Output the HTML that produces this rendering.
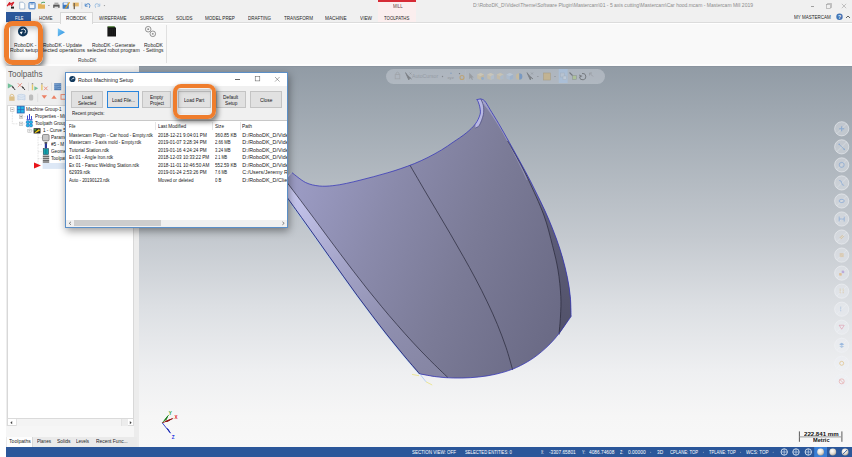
<!DOCTYPE html>
<html><head><meta charset="utf-8">
<style>
*{margin:0;padding:0;box-sizing:border-box}
html,body{width:852px;height:457px;overflow:hidden;background:#fff;font-family:"Liberation Sans",sans-serif;color:#333}
.a{position:absolute;white-space:nowrap}
.b{position:absolute}
</style></head><body>
<div class="b" style="left:6px;top:0;width:846px;height:23px;background:#f0f0f0"></div>
<div class="b" style="left:377.8px;top:2px;width:38.4px;height:20.5px;background:#fbeeee"></div>
<div class="b" style="left:377.8px;top:0;width:38.4px;height:2px;background:#d62a35"></div>
<div class="a" id="t0" style="left:393.40px;top:3.60px;font-size:5.4px;line-height:5.4px;color:#6a4040;transform:scaleX(0.8010);transform-origin:0 0;">MILL</div>
<div class="a" id="t1" style="left:472.90px;top:3.10px;font-size:5px;line-height:5px;color:#8c8c8c;transform:scaleX(1.0019);transform-origin:0 0;">D:\RoboDK_D\Video\Theme\Software Plugin\Mastercam\01 - 5 axis cutting\Mastercam\Car hood.mcam - Mastercam Mill 2019</div>
<div class="b" style="left:810.5px;top:6px;width:3.5px;height:0.6px;background:#a0a0a0"></div>
<svg class="b" style="left:825px;top:2px" width="8" height="8"><rect x="1.5" y="2.5" width="4" height="4" fill="none" stroke="#a0a0a0" stroke-width="0.6"/><path d="M2.5 2.5V1.5H6.5V5.5H5.5" fill="none" stroke="#a0a0a0" stroke-width="0.6"/></svg>
<svg class="b" style="left:840px;top:1.5px" width="8" height="8"><path d="M1.8 1.8L6.2 6.2M6.2 1.8L1.8 6.2" stroke="#a0a0a0" stroke-width="0.6"/></svg>
<div class="b" style="left:6px;top:22.3px;width:846px;height:1.2px;background:#dcdcdc"></div>
<div class="b" style="left:6px;top:11.7px;width:25px;height:10.8px;background:#2b579a"></div>
<div class="a" id="t2" style="left:14.50px;top:15.50px;font-size:5.6px;line-height:5.6px;color:#fff;transform:scaleX(0.7186);transform-origin:0 0;">FILE</div>
<div class="a" id="t3" style="left:39.00px;top:15.50px;font-size:5.6px;line-height:5.6px;color:#262626;transform:scaleX(0.8104);transform-origin:0 0;">HOME</div>
<div class="b" style="left:59.6px;top:12.3px;width:33.1px;height:11.3px;background:#f9f9f9;border:1px solid #d8d8d8;border-bottom:none"></div>
<div class="a" id="t4" style="left:65.60px;top:15.50px;font-size:5.6px;line-height:5.6px;color:#262626;transform:scaleX(0.8412);transform-origin:0 0;">ROBODK</div>
<div class="a" id="t5" style="left:99.40px;top:15.50px;font-size:5.6px;line-height:5.6px;color:#262626;transform:scaleX(0.8073);transform-origin:0 0;">WIREFRAME</div>
<div class="a" id="t6" style="left:140.00px;top:15.50px;font-size:5.6px;line-height:5.6px;color:#262626;transform:scaleX(0.7793);transform-origin:0 0;">SURFACES</div>
<div class="a" id="t7" style="left:175.90px;top:15.50px;font-size:5.6px;line-height:5.6px;color:#262626;transform:scaleX(0.7988);transform-origin:0 0;">SOLIDS</div>
<div class="a" id="t8" style="left:205.00px;top:15.50px;font-size:5.6px;line-height:5.6px;color:#262626;transform:scaleX(0.8168);transform-origin:0 0;">MODEL PREP</div>
<div class="a" id="t9" style="left:247.60px;top:15.50px;font-size:5.6px;line-height:5.6px;color:#262626;transform:scaleX(0.8009);transform-origin:0 0;">DRAFTING</div>
<div class="a" id="t10" style="left:283.60px;top:15.50px;font-size:5.6px;line-height:5.6px;color:#262626;transform:scaleX(0.8183);transform-origin:0 0;">TRANSFORM</div>
<div class="a" id="t11" style="left:325.40px;top:15.50px;font-size:5.6px;line-height:5.6px;color:#262626;transform:scaleX(0.8373);transform-origin:0 0;">MACHINE</div>
<div class="a" id="t12" style="left:360.00px;top:15.50px;font-size:5.6px;line-height:5.6px;color:#262626;transform:scaleX(0.8393);transform-origin:0 0;">VIEW</div>
<div class="a" id="t13" style="left:384.30px;top:15.50px;font-size:5.6px;line-height:5.6px;color:#262626;transform:scaleX(0.7678);transform-origin:0 0;">TOOLPATHS</div>
<div class="a" id="t14" style="left:794.00px;top:14.90px;font-size:5.6px;line-height:5.6px;color:#262626;transform:scaleX(0.8049);transform-origin:0 0;">MY MASTERCAM</div>
<svg class="b" style="left:834.5px;top:13px" width="9" height="9"><circle cx="4.5" cy="3.7" r="3.2" fill="#4174b5"/><text x="4.5" y="5.6" font-size="5" font-weight="bold" fill="#fff" text-anchor="middle" font-family="Liberation Sans">?</text></svg>
<svg class="b" style="left:845px;top:14px" width="6" height="6"><path d="M1 4L3 2L5 4" fill="none" stroke="#555" stroke-width="0.9"/></svg>
<svg class="b" style="left:0;top:0" width="110" height="11">
<path d="M7.2 6.2L9.8 2.3L9.6 4.6L13.8 2.2L11.2 6.2" fill="none" stroke="#d4202a" stroke-width="1.3"/>
<rect x="11" y="6.6" width="3" height="2" fill="#222"/>
<path d="M19.7 2.2H23L24.8 4V9H19.7Z" fill="#fdfdfd" stroke="#8aa7c8" stroke-width="0.7"/>
<rect x="29" y="2.6" width="6" height="6.2" fill="#f4f7fb" stroke="#3b77c0" stroke-width="1" rx="0.4"/><rect x="30.4" y="2.6" width="3.2" height="2.2" fill="#3b77c0" opacity="0.5"/>
<path d="M38 3.8H41L41.8 4.6H45V8.8H38Z" fill="#e2b25a"/><path d="M41 3.2Q43 1.5 45 2.5" fill="none" stroke="#3a9a55" stroke-width="0.9"/>
<path d="M48 5L49.8 5L48.9 6Z" fill="#777"/>
<rect x="53.2" y="4.5" width="6.4" height="3.4" fill="#555" rx="0.6"/><rect x="54.4" y="2.6" width="4" height="2" fill="#aaa"/><rect x="54.4" y="6.6" width="4" height="2" fill="#ddd"/>
<rect x="62.6" y="2.6" width="6.2" height="6.2" fill="#3b77c0" rx="0.5"/><rect x="63.6" y="2.6" width="4" height="2.2" fill="#e9eef5"/><path d="M65.5 8.5L69.5 2.2" stroke="#e8a317" stroke-width="1.2"/>
<rect x="72.8" y="2.6" width="6" height="3.8" fill="#e6b86b"/><rect x="73.6" y="3" width="1.4" height="6.2" fill="#7a6a55"/>
<rect x="81.6" y="2" width="0.6" height="7" fill="#cfcfcf"/>
<path d="M85.2 3.6V6.2H87.6M85.4 6Q86.2 3 89.2 3.8Q90.6 5 89.4 7.8" fill="none" stroke="#4b86c8" stroke-width="0.9"/>
<path d="M99.8 3.6V6.2H97.4M99.6 6Q98.8 3 95.8 3.8Q94.4 5 95.6 7.8" fill="none" stroke="#9fbfe0" stroke-width="0.9"/>
<path d="M103.6 5.2L105.2 5.2L104.4 6.2Z" fill="#777"/>
</svg>
<div class="b" style="left:6px;top:23.5px;width:846px;height:42.2px;background:#fdfdfd"></div>
<div class="b" style="left:6px;top:23.5px;width:846px;height:40.1px;background:#f9f9f9"></div>
<div class="b" style="left:166px;top:25px;width:0.8px;height:38px;background:#e0e0e0"></div>
<svg class="b" style="left:40px;top:24px" width="125" height="16">
<defs><linearGradient id="pl" x1="0" y1="0" x2="1" y2="1"><stop offset="0" stop-color="#7ccaf5"/><stop offset="1" stop-color="#2a8ee0"/></linearGradient></defs>
<path d="M17.8 4.2L25 8.3L17.8 12.4Z" fill="url(#pl)"/>
<path d="M67.4 2.6H74.5L76 4.1V12.4H67.4Z" fill="#151515"/><path d="M68 2.6H74.3L74.9 3.3H68Z" fill="#4f9a2a"/><path d="M69 5V11M70.8 5V11M72.6 5V11M74.4 5V11" stroke="#2c2c2c" stroke-width="0.4"/>
<g fill="#f4f4f4" stroke="#8a8a8a" stroke-width="0.9"><circle cx="108.2" cy="5.2" r="2.8"/><circle cx="112.8" cy="9.8" r="2.8"/></g>
<g fill="#8a8a8a"><circle cx="108.2" cy="5.2" r="0.9"/><circle cx="112.8" cy="9.8" r="0.9"/></g>
</svg>
<div class="a" id="t15" style="left:43.40px;top:43.00px;font-size:5.6px;line-height:5.6px;color:#262626;transform:scaleX(0.8855);transform-origin:0 0;">RoboDK - Update</div>
<div class="a" id="t16" style="left:36.60px;top:48.40px;font-size:5.6px;line-height:5.6px;color:#262626;transform:scaleX(0.9914);transform-origin:0 0;">selected operations</div>
<div class="a" id="t17" style="left:92.00px;top:43.00px;font-size:5.6px;line-height:5.6px;color:#262626;transform:scaleX(0.8759);transform-origin:0 0;">RoboDK - Generate</div>
<div class="a" id="t18" style="left:87.30px;top:48.40px;font-size:5.6px;line-height:5.6px;color:#262626;transform:scaleX(0.9160);transform-origin:0 0;">selected robot program</div>
<div class="a" id="t19" style="left:143.50px;top:43.00px;font-size:5.6px;line-height:5.6px;color:#262626;transform:scaleX(0.8934);transform-origin:0 0;">RoboDK</div>
<div class="a" id="t20" style="left:142.80px;top:48.40px;font-size:5.6px;line-height:5.6px;color:#262626;transform:scaleX(0.8629);transform-origin:0 0;">- Settings</div>
<div class="a" id="t21" style="left:77.50px;top:58.20px;font-size:5.6px;line-height:5.6px;color:#3a3a3a;transform:scaleX(0.8697);transform-origin:0 0;">RoboDK</div>
<div class="b" style="left:4.2px;top:21.1px;width:38.4px;height:44.3px;border-radius:8px;box-shadow:1.5px 2.5px 5px rgba(0,0,0,0.5)"></div>
<div class="b" style="left:9.5px;top:26px;width:28.7px;height:34.4px;background:#fafafa;box-shadow:inset 2.5px 2px 6px rgba(0,0,0,0.3)"></div>
<svg class="b" style="left:16px;top:25px" width="14" height="13">
<circle cx="6.9" cy="6.5" r="4.9" fill="#0f3557"/>
<path d="M5.2 4.8Q7.5 3 9.2 4.9Q10.2 6.6 8.8 8.2" fill="none" stroke="#fff" stroke-width="0.9"/><path d="M3.8 6.9L6.8 6.6L5.3 9.4Z" fill="#fff"/>
</svg>
<div class="a" id="t22" style="left:14.20px;top:42.50px;font-size:5.6px;line-height:5.6px;color:#262626;transform:scaleX(0.9120);transform-origin:0 0;">RoboDK -</div>
<div class="a" id="t23" style="left:10.40px;top:48.40px;font-size:5.6px;line-height:5.6px;color:#262626;transform:scaleX(0.9214);transform-origin:0 0;">Robot setup</div>
<div class="b" style="left:4.2px;top:21.1px;width:38.8px;height:44.3px;border:5px solid #ef7d2d;border-radius:8.5px"></div>
<div class="b" style="left:6px;top:65.7px;width:133px;height:381.3px;background:#eeeeee"></div>
<div class="a" id="t24" style="left:8.40px;top:69.50px;font-size:8.6px;line-height:8.6px;color:#5a5a5a;transform:scaleX(0.9376);transform-origin:0 0;">Toolpaths</div>
<svg class="b" style="left:6px;top:80px" width="133" height="24">
<path d="M1.8 3.2L6.8 5.8L1.8 8.4Z" fill="#72c09a"/><path d="M6.2 6.4L9.2 10" stroke="#3a3a3a" stroke-width="1"/><path d="M5.8 5.8L8.2 7.2L6.8 8.2Z" fill="#3a3a3a"/>
<path d="M11.8 3.2L15.8 7.2M15.8 3.2L11.8 7.2" stroke="#e98a7a" stroke-width="0.9"/><path d="M16.2 6.6L19 10" stroke="#3a3a3a" stroke-width="1"/><path d="M15.6 6L18 7.4L16.6 8.4Z" fill="#3a3a3a"/>
<rect x="22" y="2.5" width="0.6" height="8.5" fill="#d6d6d6"/>
<rect x="25.8" y="3" width="1.4" height="1.6" fill="#9a9a9a"/><rect x="25.8" y="4.6" width="1.4" height="5.6" fill="#e6c86a"/><path d="M28.4 6.2L32.2 8.3L28.4 10.4Z" fill="#72c09a"/>
<rect x="35.2" y="3" width="1.4" height="1.6" fill="#9a9a9a"/><rect x="35.2" y="4.6" width="1.4" height="5.6" fill="#e6c86a"/><path d="M38 6.6L41.6 10.2M41.6 6.6L38 10.2" stroke="#e98a7a" stroke-width="0.9"/>
<rect x="45.2" y="2.5" width="0.6" height="8.5" fill="#d6d6d6"/>
<rect x="48.2" y="3.2" width="7" height="7" fill="#4f7db5"/><path d="M48.2 4.6Q50 4 51.7 4.6T55.2 4.6M48.2 6.4Q50 5.8 51.7 6.4T55.2 6.4M48.2 8.2Q50 7.6 51.7 8.2T55.2 8.2" fill="none" stroke="#a9c6e8" stroke-width="0.5"/>
<rect x="59" y="4" width="1" height="6" fill="#e3c255"/>
<rect x="3.2" y="16.4" width="5.4" height="4.4" fill="#dcc08a"/><path d="M4.2 16.4V15Q5.9 13.4 7.6 15V16.4" fill="none" stroke="#dcc08a" stroke-width="0.9"/>
<path d="M11.8 15Q15 13.5 19 15V20Q15 18.5 11.8 20Z" fill="#e4ecf5" stroke="#b4c8e0" stroke-width="0.6"/><path d="M12 16.6Q15.4 15.2 18.8 16.6M12 18.3Q15.4 16.9 18.8 18.3" fill="none" stroke="#b4c8e0" stroke-width="0.5"/>
<rect x="23" y="14.5" width="4.2" height="6" fill="#bdbdbd" rx="1.5"/>
<rect x="31.5" y="13.5" width="0.6" height="8.5" fill="#d6d6d6"/>
<path d="M35.6 15.2L41 15.2L38.3 18.8Z" fill="#ec8064"/>
<path d="M45.4 18.8L50.7 18.8L48 15.2Z" fill="#ec8064"/>
<rect x="55" y="14.6" width="5" height="4.6" fill="none" stroke="#ec8064" stroke-width="0.9"/>
</svg>
<div class="b" style="left:6.9px;top:105px;width:126.9px;height:321.4px;background:#fff;border:0.5px solid #d8d8d8"></div>
<div class="b" style="left:133.8px;top:66px;width:5.2px;height:381px;background:#ececec"></div>
<svg class="b" style="left:6px;top:104px" width="70" height="68">
<g fill="none" stroke="#bdbdbd" stroke-width="0.5" stroke-dasharray="0.8 0.8">
<path d="M6.3 6V19.8H12"/><path d="M15 13V12.7H20M15 19.8H20"/><path d="M23.5 23V26.8H28"/><path d="M32 30V61.6H28M32 33.7H36M32 40.6H36M32 47.7H36M32 54.7H36"/>
</g>
<rect x="4.6" y="3.8" width="3.4" height="3.4" fill="#fff" stroke="#aaa" stroke-width="0.5"/>
<path d="M5.4 5.5H7.2" stroke="#555" stroke-width="0.5"/>
<rect x="11.2" y="2.2" width="7" height="6.8" fill="#1fb7e8" stroke="#2c5fb0" stroke-width="0.8"/><path d="M14.7 2.2V9M11.2 5.6H18.2" stroke="#2c5fb0" stroke-width="0.7"/>
<rect x="13.4" y="11" width="3.4" height="3.4" fill="#fff" stroke="#aaa" stroke-width="0.5"/><path d="M14.2 12.7H16M15.1 11.8V13.6" stroke="#555" stroke-width="0.5"/>
<path d="M20.5 15.8H26.5M21.5 15.5V11.5M23.5 15.5V10M25.5 15.5V12" stroke="#2233cc" stroke-width="0.9"/>
<rect x="13.4" y="18.1" width="3.4" height="3.4" fill="#fff" stroke="#aaa" stroke-width="0.5"/><path d="M14.2 19.8H16" stroke="#555" stroke-width="0.5"/>
<g fill="#1fb7e8" stroke="#2c5fb0" stroke-width="0.5"><circle cx="21.8" cy="18.2" r="1.6"/><circle cx="25" cy="18.2" r="1.6"/><circle cx="21.8" cy="21.4" r="1.6"/><circle cx="25" cy="21.4" r="1.6"/></g>
<rect x="21.8" y="25.2" width="3.4" height="3.4" fill="#fff" stroke="#aaa" stroke-width="0.5"/><path d="M22.6 26.9H24.4" stroke="#555" stroke-width="0.5"/>
<path d="M27.6 24.2H34.5V29.5H27.6Z" fill="#2a2a2a"/><path d="M28.5 28.5L33 25L34 26.5L29.5 29Z" fill="#f0d010"/><rect x="28.2" y="25" width="2" height="1.6" fill="#40a040"/>
<rect x="36.5" y="30.5" width="6.6" height="6.4" rx="1.2" fill="#c8c8c8" stroke="#555" stroke-width="0.6"/>
<path d="M38.8 38.5V43.5L40 45L41 43.5V38.5Z" fill="#2a3a9a"/><rect x="38.6" y="38" width="2.6" height="1.6" fill="#555"/>
<rect x="37.2" y="44.6" width="5.4" height="6" fill="#15a5b0" stroke="#234" stroke-width="0.5"/><path d="M39.9 45V50" stroke="#0d5560" stroke-width="0.5"/>
<g stroke="#111" stroke-width="0.9"><path d="M36.8 52.2H43.2M36.8 54.2H43.2M36.8 56.2H43.2M36.8 58H43.2"/></g>
<path d="M28 58.6L35 61.6L28 64.6Z" fill="#e8141a"/>
<rect x="36.6" y="59" width="33.4" height="5.9" fill="#dde8f6"/>
</svg>
<div class="a" id="t25" style="left:25.90px;top:106.80px;font-size:5.6px;line-height:5.6px;color:#161616;transform:scaleX(0.8237);transform-origin:0 0;">Machine Group-1</div>
<div class="a" id="t26" style="left:34.80px;top:113.90px;font-size:5.6px;line-height:5.6px;color:#161616;transform:scaleX(0.8239);transform-origin:0 0;">Properties - Mill Default</div>
<div class="a" id="t27" style="left:34.80px;top:121.00px;font-size:5.6px;line-height:5.6px;color:#161616;transform:scaleX(0.8234);transform-origin:0 0;">Toolpath Group-1</div>
<div class="a" id="t28" style="left:43.40px;top:128.00px;font-size:5.6px;line-height:5.6px;color:#161616;transform:scaleX(0.8231);transform-origin:0 0;">1 - Curve 5-axis</div>
<div class="a" id="t29" style="left:51.10px;top:134.90px;font-size:5.6px;line-height:5.6px;color:#161616;transform:scaleX(0.8229);transform-origin:0 0;">Parameters</div>
<div class="a" id="t30" style="left:51.10px;top:141.80px;font-size:5.6px;line-height:5.6px;color:#161616;transform:scaleX(0.8260);transform-origin:0 0;">#5 - M</div>
<div class="a" id="t31" style="left:51.10px;top:149.00px;font-size:5.6px;line-height:5.6px;color:#161616;transform:scaleX(0.8224);transform-origin:0 0;">Geometry</div>
<div class="a" id="t32" style="left:51.10px;top:155.90px;font-size:5.6px;line-height:5.6px;color:#161616;transform:scaleX(0.8225);transform-origin:0 0;">Toolpath</div>
<div class="b" style="left:6px;top:426.4px;width:128px;height:10.7px;background:#f6f6f6"></div>
<div class="b" style="left:7px;top:418.4px;width:126.8px;height:8px;background:#fff;border:0.6px solid #dadada"></div>
<div class="b" style="left:15.6px;top:419.2px;width:106px;height:6.4px;background:#f4f4f4;border-left:0.6px solid #e2e2e2;border-right:0.6px solid #e2e2e2"></div>
<div class="b" style="left:121.6px;top:419.2px;width:6px;height:6.4px;background:#ececec"></div>
<svg class="b" style="left:7px;top:418.6px" width="127" height="8"><path d="M5.2 2.1L3.3 3.7L5.2 5.3Z" fill="#444"/><path d="M122.8 2.1L124.7 3.7L122.8 5.3Z" fill="#444"/></svg>
<div class="b" style="left:6px;top:437.1px;width:131px;height:9.7px;background:#eaeaea"></div>
<div class="b" style="left:6.6px;top:437.1px;width:26.3px;height:9.7px;background:#fdfdfd;border-right:0.5px solid #d8d8d8"></div>
<div class="a" id="t33" style="left:8.50px;top:438.90px;font-size:5.4px;line-height:5.4px;color:#1e1e1e;transform:scaleX(0.9490);transform-origin:0 0;">Toolpaths</div>
<div class="a" id="t34" style="left:37.00px;top:439.10px;font-size:5.4px;line-height:5.4px;color:#1e1e1e;transform:scaleX(0.8493);transform-origin:0 0;">Planes</div>
<div class="a" id="t35" style="left:57.20px;top:439.10px;font-size:5.4px;line-height:5.4px;color:#1e1e1e;transform:scaleX(0.9191);transform-origin:0 0;">Solids</div>
<div class="a" id="t36" style="left:76.40px;top:439.10px;font-size:5.4px;line-height:5.4px;color:#1e1e1e;transform:scaleX(0.8401);transform-origin:0 0;">Levels</div>
<div class="a" id="t37" style="left:95.60px;top:439.10px;font-size:5.4px;line-height:5.4px;color:#1e1e1e;transform:scaleX(0.9041);transform-origin:0 0;">Recent Func...</div>
<div class="b" style="left:139px;top:65.7px;width:713px;height:381.3px;background:linear-gradient(#919ba5 0%,#aab2ba 22%,#c4c9cf 45%,#dcdfe3 63%,#eeeff1 80%,#f6f6f6 92%,#f8f8f8 100%)"></div>
<div class="b" style="left:139px;top:65.7px;width:713px;height:1px;background:#8a949f"></div>
<div class="b" style="left:385.6px;top:68.5px;width:219.2px;height:15px;border-radius:7.5px;background:rgba(212,217,223,0.42)"></div>
<div class="a" id="t38" style="left:412.40px;top:72.80px;font-size:6.2px;line-height:6.2px;color:#959ca5;transform:scaleX(0.8339);transform-origin:0 0;">AutoCursor</div>
<svg class="b" style="left:385px;top:68px" width="222" height="16">
<g opacity="0.4">
<rect x="10.2" y="6.6" width="4.6" height="4.2" fill="none" stroke="#8a8a8a" stroke-width="0.8"/><path d="M11 6.6V5Q12.5 3.4 14 5V6.6" fill="none" stroke="#8a8a8a" stroke-width="0.8"/>
<path d="M20.5 4.5L23.8 11.8L24.6 9.4L26.5 11" fill="#333" stroke="#333" stroke-width="1"/><path d="M24.5 4.5L26.5 6.5M26.5 4.5L24.5 6.5" stroke="#555" stroke-width="0.5"/>
<circle cx="57.5" cy="8.5" r="0.7" fill="#444"/>
<text x="62.5" y="11" font-size="4.2" fill="#666" font-family="Liberation Sans">xyz</text><circle cx="66" cy="5.2" r="0.7" fill="#3a78c0"/>
<circle cx="77" cy="9.5" r="2" fill="none" stroke="#d08a10" stroke-width="1.1"/><circle cx="74.5" cy="5.6" r="0.7" fill="#222"/>
<path d="M84.2 4.8V11.2L85.8 9.8L87 12L88 11.5L86.8 9.4H88.8Z" fill="#777"/><rect x="80.6" y="2" width="0.5" height="12" fill="#c8ccd2"/><path d="M95.6 5L99.0 6.6V10.4L95.6 12L92.19999999999999 10.4V6.6Z" fill="#e6c88a"/><path d="M95.6 5L99.0 6.6L95.6 8.2L92.19999999999999 6.6Z" fill="#f0dcae"/><path d="M95.6 8.2L99.0 6.6V10.4L95.6 12Z" fill="#d8b878"/><circle cx="97.5" cy="10.5" r="1.4" fill="#6aa0d8"/><path d="M105.6 5L109.0 6.6V10.4L105.6 12L102.19999999999999 10.4V6.6Z" fill="#e2c890"/><path d="M105.6 5L109.0 6.6L105.6 8.2L102.19999999999999 6.6Z" fill="#eedcb8"/><path d="M105.6 8.2L109.0 6.6V10.4L105.6 12Z" fill="#b8cce0"/><path d="M115.2 5L118.60000000000001 6.6V10.4L115.2 12L111.8 10.4V6.6Z" fill="#e0c088"/><path d="M115.2 5L118.60000000000001 6.6L115.2 8.2L111.8 6.6Z" fill="#e8d4a8"/><path d="M115.2 8.2L118.60000000000001 6.6V10.4L115.2 12Z" fill="#a8c0dc"/><path d="M124.8 5L128.2 6.6V10.4L124.8 12L121.39999999999999 10.4V6.6Z" fill="#a8c4e4"/><path d="M124.8 5L128.2 6.6L124.8 8.2L121.39999999999999 6.6Z" fill="#c8dcf0"/><path d="M124.8 8.2L128.2 6.6V10.4L124.8 12Z" fill="#8ab0dc"/><circle cx="134.2" cy="8.5" r="3.2" fill="#e5c074"/><path d="M134.2 5.3A3.2 3.2 0 0 1 134.2 11.7Z" fill="#2a70c8"/>
<path d="M142 4.5L145.3 11.8L146.1 9.4L148 11" fill="#333" stroke="#333" stroke-width="1"/><path d="M146 4.5L148 6.5M148 4.5L146 6.5" stroke="#555" stroke-width="0.5"/>
<circle cx="152.9" cy="8.5" r="0.6" fill="#444"/>
<rect x="158.5" y="5" width="6.8" height="7" fill="#e0b050" stroke="#a07a30" stroke-width="0.6"/>
<circle cx="170" cy="8.5" r="0.6" fill="#444"/>
</g>
<rect x="173.7" y="1" width="9" height="14" fill="rgba(165,198,235,0.5)"/>
<g opacity="0.4">
<rect x="175.5" y="5" width="4" height="4" fill="#ccc" stroke="#999" stroke-width="0.5"/><rect x="178" y="8" width="3.5" height="3.5" fill="#ddd" stroke="#999" stroke-width="0.5"/>
<path d="M184.5 4.5L188 8" stroke="#222" stroke-width="1.1"/><rect x="187.5" y="7.5" width="4" height="4" fill="#a8d060" stroke="#555" stroke-width="0.5"/>
<path d="M197 5.5A3.2 3.2 0 1 1 194.5 9" fill="none" stroke="#222" stroke-width="1"/><path d="M194 6.5L195 9.5L197.5 8" fill="#222"/>
<path d="M204.5 5L208 8.5M204.5 5V7.5M204.5 5H207" stroke="#777" stroke-width="0.8" fill="none"/>
</g>
</svg>
<svg class="b" style="left:0;top:0" width="852" height="457">
<defs>
<linearGradient id="hg" x1="300" y1="190" x2="565" y2="300" gradientUnits="userSpaceOnUse">
<stop offset="0" stop-color="#9a9ac2"/><stop offset="0.3" stop-color="#8a8aab"/><stop offset="0.62" stop-color="#7b7b97"/><stop offset="1" stop-color="#6b6b86"/>
</linearGradient>
<linearGradient id="fl" x1="295" y1="185" x2="430" y2="370" gradientUnits="userSpaceOnUse">
<stop offset="0" stop-color="#c8c8f0"/><stop offset="0.4" stop-color="#a4a4c8"/><stop offset="0.75" stop-color="#8e8eae"/><stop offset="1" stop-color="#8686a4"/>
</linearGradient>
<linearGradient id="fr" x1="0" y1="100" x2="0" y2="330" gradientUnits="userSpaceOnUse"><stop offset="0" stop-color="#a4a4cc"/><stop offset="0.3" stop-color="#8282a6"/><stop offset="0.5" stop-color="#5e5e7a"/><stop offset="1" stop-color="#52526a"/></linearGradient>
</defs>
<path d="M287.5 198.0C289.9 201.3 296.9 211.1 301.6 217.6C306.3 224.1 310.9 230.6 315.5 237.1C320.1 243.6 324.8 250.2 329.4 256.7C334.0 263.2 338.6 269.7 343.3 276.2C348.0 282.7 352.6 289.3 357.4 295.8C362.2 302.3 367.1 308.8 372.0 315.3C376.9 321.8 381.9 328.4 387.1 334.9C392.3 341.4 397.6 347.9 403.0 354.4C408.4 360.9 416.9 370.7 419.7 374.0" fill="none" stroke="#a6cdf5" stroke-width="1.8"/>
<path d="M292.0 172.7C294.3 174.3 301.1 180.3 305.6 182.5C310.1 184.7 314.7 185.5 319.2 186.0C323.7 186.5 328.3 186.1 332.8 185.7C337.3 185.3 341.9 184.3 346.4 183.4C350.9 182.5 355.5 181.3 360.0 180.2C364.5 179.1 369.1 177.9 373.6 176.7C378.1 175.5 382.7 174.2 387.2 172.9C391.7 171.6 396.3 170.2 400.8 168.6C405.3 167.0 409.9 165.5 414.4 163.6C418.9 161.7 423.5 159.7 428.0 157.4C432.5 155.1 437.4 152.4 441.6 149.9C445.8 147.4 449.0 145.0 453.1 142.2C457.2 139.4 462.5 136.1 466.2 133.0C469.9 129.9 473.1 127.0 475.4 123.9C477.7 120.9 479.2 117.3 480.0 114.7C480.8 112.1 480.3 110.3 480.0 108.1C479.7 105.9 478.7 103.0 478.1 101.6C477.6 100.2 476.9 99.9 476.7 99.6L480.7 98.9C481.4 99.2 483.1 99.2 484.6 100.9C486.2 102.7 487.7 105.6 490.0 109.4C492.3 113.2 495.4 118.0 498.6 123.5C501.9 129.1 505.9 136.3 509.5 142.7C513.1 149.1 516.7 155.6 520.2 162.0C523.7 168.4 527.2 174.8 530.5 181.2C533.8 187.6 537.0 194.1 540.1 200.5C543.2 206.9 546.2 213.3 548.9 219.7C551.6 226.1 554.2 232.6 556.5 239.0C558.8 245.4 560.9 251.8 562.7 258.2C564.5 264.6 566.1 271.1 567.4 277.5C568.7 283.9 569.7 290.3 570.3 296.7C570.9 303.1 571.0 312.8 571.1 316.0L571.1 316.5C568.3 320.3 559.9 332.9 554.3 339.3C548.7 345.7 543.1 350.6 537.5 355.0C531.9 359.4 526.3 362.6 520.7 365.5C515.1 368.4 509.5 370.4 503.9 372.1C498.3 373.8 492.7 375.0 487.1 375.9C481.5 376.8 475.9 377.3 470.3 377.7C464.7 378.1 459.1 378.1 453.5 378.0C447.9 377.9 442.3 377.5 436.7 376.8C431.1 376.1 422.7 374.4 419.9 373.9L419.7 374.0C416.9 370.7 408.4 360.9 403.0 354.4C397.6 347.9 392.3 341.4 387.1 334.9C381.9 328.4 376.9 321.8 372.0 315.3C367.1 308.8 362.2 302.3 357.4 295.8C352.6 289.3 348.0 282.7 343.3 276.2C338.6 269.7 334.0 263.2 329.4 256.7C324.8 250.2 320.1 243.6 315.5 237.1C310.9 230.6 306.3 224.1 301.6 217.6C296.9 211.1 290.9 202.8 287.5 198.0C284.1 193.2 282.1 190.5 281.0 189.0L282 181Z" fill="url(#hg)"/>
<path d="M292 172.4L281 186L281.0 189.0C282.1 190.5 284.1 193.2 287.5 198.0C290.9 202.8 296.9 211.1 301.6 217.6C306.3 224.1 310.9 230.6 315.5 237.1C320.1 243.6 324.8 250.2 329.4 256.7C334.0 263.2 338.6 269.7 343.3 276.2C348.0 282.7 352.6 289.3 357.4 295.8C362.2 302.3 367.1 308.8 372.0 315.3C376.9 321.8 381.9 328.4 387.1 334.9C392.3 341.4 397.6 347.9 403.0 354.4C408.4 360.9 416.9 370.7 419.7 374.0L419.9 373.9C422.7 374.4 431.1 376.1 436.7 376.8C442.3 377.5 450.7 377.8 453.5 378.0L447.9 377.6C444.9 374.7 435.6 365.8 429.7 359.9C423.8 354.0 418.2 348.1 412.7 342.2C407.2 336.3 402.0 330.3 396.8 324.4C391.6 318.5 386.6 312.6 381.7 306.7C376.8 300.8 372.0 294.9 367.3 289.0C362.6 283.1 358.0 277.2 353.5 271.3C349.0 265.4 344.5 259.5 340.1 253.6C335.7 247.7 331.3 241.8 326.9 235.9C322.5 230.0 318.2 224.0 313.8 218.1C309.4 212.2 305.0 206.3 300.6 200.4C296.2 194.5 290.0 186.4 287.2 182.7C284.4 179.0 284.5 178.8 284.0 178.0Z" fill="url(#fl)"/>
<path d="M480.7 98.9C481.4 99.2 483.1 99.2 484.6 100.9C486.2 102.7 487.7 105.6 490.0 109.4C492.3 113.2 495.4 118.0 498.6 123.5C501.9 129.1 505.9 136.3 509.5 142.7C513.1 149.1 516.7 155.6 520.2 162.0C523.7 168.4 527.2 174.8 530.5 181.2C533.8 187.6 537.0 194.1 540.1 200.5C543.2 206.9 546.2 213.3 548.9 219.7C551.6 226.1 554.2 232.6 556.5 239.0C558.8 245.4 560.9 251.8 562.7 258.2C564.5 264.6 566.1 271.1 567.4 277.5C568.7 283.9 569.7 290.3 570.3 296.7C570.9 303.1 571.0 312.8 571.1 316.0L559.0 334.6C559.2 331.5 560.2 322.4 560.5 316.0C560.8 309.6 561.2 304.0 560.8 296.3C560.4 288.6 559.4 278.4 558.0 270.0C556.6 261.6 554.9 254.8 552.5 245.6C550.1 236.4 547.8 225.9 543.8 215.0C539.8 204.1 532.8 189.2 528.6 180.0C524.4 170.8 521.9 166.5 518.4 160.0C514.9 153.5 511.2 147.1 507.6 141.0C504.0 134.9 500.2 128.6 497.0 123.5C493.8 118.4 490.9 113.9 488.6 110.5C486.3 107.1 483.9 104.2 483.0 103.0Z" fill="url(#fr)"/>
<path d="M476.7 99.6L480.7 98.9L480.7 98.9C481.1 100.0 482.9 102.9 483.3 105.5C483.7 108.1 484.0 111.4 483.3 114.7C482.6 118.0 480.7 123.0 479.4 125.2C478.1 127.4 476.1 127.5 475.4 128.0L475.4 123.9C476.2 122.4 479.2 117.3 480.0 114.7C480.8 112.1 480.3 110.3 480.0 108.1C479.7 105.9 478.7 103.0 478.1 101.6C477.6 100.2 476.9 99.9 476.7 99.6Z" fill="#b8b8e2"/>
<path d="M480.7 98.9C481.1 100.0 482.9 102.9 483.3 105.5C483.7 108.1 484.0 111.4 483.3 114.7C482.6 118.0 480.7 123.0 479.4 125.2C478.1 127.4 476.1 127.5 475.4 128.0" fill="none" stroke="#3a3a70" stroke-width="0.6"/>
<path d="M483.0 103.0C485.2 105.8 491.8 113.5 496.0 120.0C500.2 126.5 504.2 134.8 508.0 142.0C511.8 149.2 515.8 156.7 519.0 163.0C522.2 169.3 525.7 177.2 527.0 180.0" fill="none" stroke="#9a9ac0" stroke-width="0.8"/>
<g fill="none" stroke="#262638" stroke-width="0.7">
<path d="M410.0 165.3C412.2 169.1 418.8 180.4 423.2 188.0C427.6 195.6 432.2 203.2 436.7 210.8C441.2 218.4 445.7 225.9 450.1 233.5C454.5 241.1 458.9 248.7 463.2 256.3C467.5 263.9 471.7 271.4 475.7 279.0C479.7 286.6 483.6 294.2 487.2 301.8C490.8 309.4 494.3 316.9 497.4 324.5C500.5 332.1 503.4 339.7 506.0 347.3C508.6 354.9 511.6 366.2 512.7 370.0"/>
<path d="M447.9 377.6C444.9 374.7 435.6 365.8 429.7 359.9C423.8 354.0 418.2 348.1 412.7 342.2C407.2 336.3 402.0 330.3 396.8 324.4C391.6 318.5 386.6 312.6 381.7 306.7C376.8 300.8 372.0 294.9 367.3 289.0C362.6 283.1 358.0 277.2 353.5 271.3C349.0 265.4 344.5 259.5 340.1 253.6C335.7 247.7 331.3 241.8 326.9 235.9C322.5 230.0 318.2 224.0 313.8 218.1C309.4 212.2 305.0 206.3 300.6 200.4C296.2 194.5 289.4 185.6 287.2 182.7"/>
<path d="M559.0 334.6C559.2 331.5 560.2 322.4 560.5 316.0C560.8 309.6 561.2 304.0 560.8 296.3C560.4 288.6 559.4 278.4 558.0 270.0C556.6 261.6 554.9 254.8 552.5 245.6C550.1 236.4 547.8 225.9 543.8 215.0C539.8 204.1 532.8 189.2 528.6 180.0C524.4 170.8 521.9 166.5 518.4 160.0C514.9 153.5 509.4 144.2 507.6 141.0"/>
</g>
<g fill="none" stroke="#3333b8" stroke-width="0.75">
<path d="M292.0 172.7C294.3 174.3 301.1 180.3 305.6 182.5C310.1 184.7 314.7 185.5 319.2 186.0C323.7 186.5 328.3 186.1 332.8 185.7C337.3 185.3 341.9 184.3 346.4 183.4C350.9 182.5 355.5 181.3 360.0 180.2C364.5 179.1 369.1 177.9 373.6 176.7C378.1 175.5 382.7 174.2 387.2 172.9C391.7 171.6 396.3 170.2 400.8 168.6C405.3 167.0 409.9 165.5 414.4 163.6C418.9 161.7 423.5 159.7 428.0 157.4C432.5 155.1 437.4 152.4 441.6 149.9C445.8 147.4 449.0 145.0 453.1 142.2C457.2 139.4 462.5 136.1 466.2 133.0C469.9 129.9 473.1 127.0 475.4 123.9C477.7 120.9 479.2 117.3 480.0 114.7C480.8 112.1 480.3 110.3 480.0 108.1C479.7 105.9 478.7 103.0 478.1 101.6C477.6 100.2 476.9 99.9 476.7 99.6L480.7 98.9C481.4 99.2 483.1 99.2 484.6 100.9C486.2 102.7 487.7 105.6 490.0 109.4C492.3 113.2 495.4 118.0 498.6 123.5C501.9 129.1 505.9 136.3 509.5 142.7C513.1 149.1 516.7 155.6 520.2 162.0C523.7 168.4 527.2 174.8 530.5 181.2C533.8 187.6 537.0 194.1 540.1 200.5C543.2 206.9 546.2 213.3 548.9 219.7C551.6 226.1 554.2 232.6 556.5 239.0C558.8 245.4 560.9 251.8 562.7 258.2C564.5 264.6 566.1 271.1 567.4 277.5C568.7 283.9 569.7 290.3 570.3 296.7C570.9 303.1 571.0 312.8 571.1 316.0L571.1 316.5C568.3 320.3 559.9 332.9 554.3 339.3C548.7 345.7 543.1 350.6 537.5 355.0C531.9 359.4 526.3 362.6 520.7 365.5C515.1 368.4 509.5 370.4 503.9 372.1C498.3 373.8 492.7 375.0 487.1 375.9C481.5 376.8 475.9 377.3 470.3 377.7C464.7 378.1 459.1 378.1 453.5 378.0C447.9 377.9 442.3 377.5 436.7 376.8C431.1 376.1 422.7 374.4 419.9 373.9"/>
</g>
<path d="M419.7 374.0C416.9 370.7 408.4 360.9 403.0 354.4C397.6 347.9 392.3 341.4 387.1 334.9C381.9 328.4 376.9 321.8 372.0 315.3C367.1 308.8 362.2 302.3 357.4 295.8C352.6 289.3 348.0 282.7 343.3 276.2C338.6 269.7 334.0 263.2 329.4 256.7C324.8 250.2 320.1 243.6 315.5 237.1C310.9 230.6 306.3 224.1 301.6 217.6C296.9 211.1 289.9 201.3 287.5 198.0" fill="none" stroke="#26267a" stroke-width="0.9"/>
<path d="M412 374.4L419 375.7M426 381.8L432.2 385" stroke="#e8e070" stroke-width="0.7"/>
<path d="M419.9 374L426 381.8" stroke="#8fb8f0" stroke-width="0.6"/>
</svg>
<svg class="b" style="left:830px;top:118px" width="22" height="275"><circle cx="11.7" cy="10.80" r="7.1" fill="rgba(238,240,244,0.4)" stroke="rgba(240,242,246,0.95)" stroke-width="0.6"/><path d="M6.7 15.80L16.7 5.80" stroke="rgba(245,247,250,0.6)" stroke-width="0.5"/><circle cx="11.7" cy="28.84" r="7.1" fill="rgba(238,240,244,0.4)" stroke="rgba(240,242,246,0.95)" stroke-width="0.6"/><path d="M6.7 33.84L16.7 23.84" stroke="rgba(245,247,250,0.6)" stroke-width="0.5"/><circle cx="11.7" cy="46.88" r="7.1" fill="rgba(238,240,244,0.4)" stroke="rgba(240,242,246,0.95)" stroke-width="0.6"/><path d="M6.7 51.88L16.7 41.88" stroke="rgba(245,247,250,0.6)" stroke-width="0.5"/><circle cx="11.7" cy="64.92" r="7.1" fill="rgba(238,240,244,0.4)" stroke="rgba(240,242,246,0.95)" stroke-width="0.6"/><path d="M6.7 69.92L16.7 59.92" stroke="rgba(245,247,250,0.6)" stroke-width="0.5"/><circle cx="11.7" cy="82.96" r="7.1" fill="rgba(238,240,244,0.4)" stroke="rgba(240,242,246,0.95)" stroke-width="0.6"/><path d="M6.7 87.96L16.7 77.96" stroke="rgba(245,247,250,0.6)" stroke-width="0.5"/><circle cx="11.7" cy="101.00" r="7.1" fill="rgba(238,240,244,0.4)" stroke="rgba(240,242,246,0.95)" stroke-width="0.6"/><path d="M6.7 106.00L16.7 96.00" stroke="rgba(245,247,250,0.6)" stroke-width="0.5"/><circle cx="11.7" cy="119.04" r="7.1" fill="rgba(238,240,244,0.4)" stroke="rgba(240,242,246,0.95)" stroke-width="0.6"/><path d="M6.7 124.04L16.7 114.04" stroke="rgba(245,247,250,0.6)" stroke-width="0.5"/><circle cx="11.7" cy="137.08" r="7.1" fill="rgba(238,240,244,0.4)" stroke="rgba(240,242,246,0.95)" stroke-width="0.6"/><path d="M6.7 142.08L16.7 132.08" stroke="rgba(245,247,250,0.6)" stroke-width="0.5"/><circle cx="11.7" cy="155.12" r="7.1" fill="rgba(238,240,244,0.4)" stroke="rgba(240,242,246,0.95)" stroke-width="0.6"/><path d="M6.7 160.12L16.7 150.12" stroke="rgba(245,247,250,0.6)" stroke-width="0.5"/><circle cx="11.7" cy="173.16" r="7.1" fill="rgba(238,240,244,0.4)" stroke="rgba(240,242,246,0.95)" stroke-width="0.6"/><path d="M6.7 178.16L16.7 168.16" stroke="rgba(245,247,250,0.6)" stroke-width="0.5"/><circle cx="11.7" cy="191.20" r="7.1" fill="rgba(238,240,244,0.4)" stroke="rgba(240,242,246,0.95)" stroke-width="0.6"/><path d="M6.7 196.20L16.7 186.20" stroke="rgba(245,247,250,0.6)" stroke-width="0.5"/><circle cx="11.7" cy="209.24" r="7.1" fill="rgba(238,240,244,0.4)" stroke="rgba(240,242,246,0.95)" stroke-width="0.6"/><path d="M6.7 214.24L16.7 204.24" stroke="rgba(245,247,250,0.6)" stroke-width="0.5"/><circle cx="11.7" cy="227.28" r="7.1" fill="rgba(238,240,244,0.4)" stroke="rgba(240,242,246,0.95)" stroke-width="0.6"/><path d="M6.7 232.28L16.7 222.28" stroke="rgba(245,247,250,0.6)" stroke-width="0.5"/><circle cx="11.7" cy="245.32" r="7.1" fill="rgba(238,240,244,0.4)" stroke="rgba(240,242,246,0.95)" stroke-width="0.6"/><path d="M6.7 250.32L16.7 240.32" stroke="rgba(245,247,250,0.6)" stroke-width="0.5"/><circle cx="11.7" cy="263.36" r="7.1" fill="rgba(238,240,244,0.4)" stroke="rgba(240,242,246,0.95)" stroke-width="0.6"/><path d="M6.7 268.36L16.7 258.36" stroke="rgba(245,247,250,0.6)" stroke-width="0.5"/><g transform="translate(11.7 10.80)" opacity="0.55"><path d="M-2.5 0H2.5M0 -2.5V2.5" stroke="#5b8fd0" stroke-width="1"/></g><g transform="translate(11.7 28.84)" opacity="0.55"><path d="M-2.5 -2.5L2.5 2.5" stroke="#5b8fd0" stroke-width="0.8"/><circle cx="-2.5" cy="-2.5" r="0.8" fill="#5b8fd0"/><circle cx="2.5" cy="2.5" r="0.8" fill="#5b8fd0"/></g><g transform="translate(11.7 46.88)" opacity="0.55"><circle r="2.5" fill="none" stroke="#5b8fd0" stroke-width="0.8"/></g><g transform="translate(11.7 64.92)" opacity="0.55"><path d="M-2.5 -2.5Q0 -2.5 0 0Q0 2.5 2.5 2.5" fill="none" stroke="#5b8fd0" stroke-width="0.8"/></g><g transform="translate(11.7 82.96)" opacity="0.55"><ellipse rx="2.6" ry="1.6" fill="none" stroke="#5b8fd0" stroke-width="0.8"/></g><g transform="translate(11.7 101.00)" opacity="0.55"><path d="M-2.5 -2.5V2.5M2.5 -2.5V2.5M-2.5 0H2.5" stroke="#5b8fd0" stroke-width="0.8"/></g><g transform="translate(11.7 119.04)" opacity="0.55"><path d="M-2 1L1 -2M-1 2L2 -1" stroke="#d9a64a" stroke-width="0.8"/></g><g transform="translate(11.7 137.08)" opacity="0.55"><rect x="-2" y="-2" width="4" height="4" fill="#d9b070" opacity="0.7"/></g><g transform="translate(11.7 155.12)" opacity="0.55"><rect x="-2.5" y="0" width="2.5" height="2.5" fill="#e0a050"/><rect x="0" y="-2.5" width="2.5" height="2.5" fill="#a080d0"/></g><g transform="translate(11.7 173.16)" opacity="0.55"><path d="M-1.5 -2.5V2.5M1.5 -2.5V2.5" stroke="#d9a64a" stroke-width="0.7" stroke-dasharray="1 0.6"/></g><g transform="translate(11.7 191.20)" opacity="0.55"><path d="M-1 -2.5V2.5" stroke="#5b8fd0" stroke-width="0.7" stroke-dasharray="1 0.6"/></g><g transform="translate(11.7 209.24)" opacity="0.55"><path d="M-2.5 -2H2.5L0 2Z" fill="none" stroke="#d86a8a" stroke-width="0.7"/></g><g transform="translate(11.7 227.28)" opacity="0.55"><path d="M-2.5 -1L0 -2.5L2.5 -1L0 0.5Z M-2.5 1L0 2.5L2.5 1" fill="#5b8fd0"/></g><g transform="translate(11.7 245.32)" opacity="0.55"><circle r="2" fill="none" stroke="#d9a64a" stroke-width="0.8"/></g><g transform="translate(11.7 263.36)" opacity="0.55"><circle r="2.5" fill="none" stroke="#e07070" stroke-width="0.7"/><path d="M-1.8 -1.8L1.8 1.8" stroke="#e07070" stroke-width="0.7"/></g></svg>
<svg class="b" style="left:150px;top:405px" width="32" height="36">
<path d="M12.3 17.9L18.8 9.9" stroke="#2a9a2a" stroke-width="0.9"/><path d="M14.5 15.5L17.6 11.2L16.3 14.6Z" fill="#1a7a1a" stroke="#1a7a1a" stroke-width="0.8"/>
<path d="M12.3 17.9L23.2 13.4" stroke="#9a1a1a" stroke-width="0.9"/><path d="M15.5 16.4L21.5 14L17.5 16.5Z" fill="#8a1010" stroke="#8a1010" stroke-width="0.8"/>
<path d="M12.3 17.9L20.6 28.3" stroke="#2233cc" stroke-width="0.9"/><path d="M17 23.5L20 27.5L18.4 24.6Z" fill="#1a2ab0" stroke="#1a2ab0" stroke-width="0.8"/>
<text x="18.8" y="9.6" font-size="4.6" font-weight="bold" fill="#28a028" font-family="Liberation Sans">Y</text>
<text x="24.4" y="14.4" font-size="4.6" font-weight="bold" fill="#e02020" font-family="Liberation Sans">X</text>
<text x="21.8" y="33.8" font-size="4.6" font-weight="bold" fill="#2030e0" font-family="Liberation Sans">Z</text>
</svg>
<svg class="b" style="left:795px;top:428px" width="52" height="16">
<path d="M4.4 3.4V13.8M46.9 3.4V13.8" stroke="#333" stroke-width="0.8"/>
<path d="M4.4 8.9H46.9" stroke="#999" stroke-width="1"/>
</svg>
<div class="a" id="t39" style="left:803.70px;top:431.50px;font-size:5px;line-height:5px;color:#111;transform:scaleX(1.2201);transform-origin:0 0;font-weight:bold">222.841 mm</div>
<div class="a" id="t40" style="left:812.50px;top:437.50px;font-size:5px;line-height:5px;color:#111;transform:scaleX(1.1198);transform-origin:0 0;font-weight:bold">Metric</div>
<div class="b" style="left:6px;top:446.8px;width:846px;height:10.2px;background:#2b579a"></div>
<div class="a" id="t41" style="left:412.20px;top:450.40px;font-size:5.4px;line-height:5.4px;color:#fff;transform:scaleX(0.8333);transform-origin:0 0;">SECTION VIEW: OFF</div>
<div class="a" id="t42" style="left:464.80px;top:450.40px;font-size:5.4px;line-height:5.4px;color:#fff;transform:scaleX(0.7788);transform-origin:0 0;">SELECTED ENTITIES: 0</div>
<div class="a" id="t43" style="left:540.60px;top:450.40px;font-size:5.4px;line-height:5.4px;color:#fff;transform:scaleX(0.5693);transform-origin:0 0;">X:</div>
<div class="a" id="t44" style="left:548.50px;top:450.40px;font-size:5.4px;line-height:5.4px;color:#fff;transform:scaleX(0.8817);transform-origin:0 0;">-3307.65801</div>
<div class="a" id="t45" style="left:581.70px;top:450.40px;font-size:5.4px;line-height:5.4px;color:#fff;transform:scaleX(0.6879);transform-origin:0 0;">Y:</div>
<div class="a" id="t46" style="left:588.50px;top:450.40px;font-size:5.4px;line-height:5.4px;color:#fff;transform:scaleX(0.8882);transform-origin:0 0;">4086.74608</div>
<div class="a" id="t47" style="left:620.30px;top:450.40px;font-size:5.4px;line-height:5.4px;color:#fff;transform:scaleX(0.6671);transform-origin:0 0;">Z:</div>
<div class="a" id="t48" style="left:627.90px;top:450.40px;font-size:5.4px;line-height:5.4px;color:#fff;transform:scaleX(0.9077);transform-origin:0 0;">0.00000</div>
<div class="a" id="t49" style="left:656.90px;top:450.40px;font-size:5.4px;line-height:5.4px;color:#fff;transform:scaleX(0.8833);transform-origin:0 0;">3D</div>
<div class="a" id="t50" style="left:669.60px;top:450.40px;font-size:5.4px;line-height:5.4px;color:#fff;transform:scaleX(0.7926);transform-origin:0 0;">CPLANE: TOP</div>
<div class="a" id="t51" style="left:708.50px;top:450.40px;font-size:5.4px;line-height:5.4px;color:#fff;transform:scaleX(0.7659);transform-origin:0 0;">TPLANE: TOP</div>
<div class="a" id="t52" style="left:745.60px;top:450.40px;font-size:5.4px;line-height:5.4px;color:#fff;transform:scaleX(0.8538);transform-origin:0 0;">WCS: TOP</div>
<svg class="b" style="left:640px;top:447px" width="212" height="10"><defs><radialGradient id="sph" cx="0.4" cy="0.35" r="0.7"><stop offset="0" stop-color="#ffffff"/><stop offset="0.6" stop-color="#e2ddd2"/><stop offset="1" stop-color="#a9a294"/></radialGradient></defs><circle cx="10.7" cy="5.2" r="0.5" fill="#9ab"/><circle cx="63.4" cy="5.2" r="0.5" fill="#9ab"/><circle cx="100.6" cy="5.2" r="0.5" fill="#9ab"/><circle cx="133.2" cy="5.2" r="0.5" fill="#9ab"/><rect x="174.2" y="0" width="12.8" height="10" fill="#3a7fd5"/><circle cx="144.2" cy="5" r="3.2" fill="none" stroke="#dde6f2" stroke-width="0.9"/><path d="M141.0 5H147.4M144.2 1.8V8.2" stroke="#dde6f2" stroke-width="0.6"/><circle cx="156.0" cy="5" r="3.2" fill="none" stroke="#dde6f2" stroke-width="0.9"/><path d="M152.8 5H159.2M156.0 1.8V8.2" stroke="#dde6f2" stroke-width="0.6"/><circle cx="168.3" cy="5" r="3.2" fill="none" stroke="#dde6f2" stroke-width="0.9"/><path d="M165.1 5H171.5M168.3 1.8V8.2" stroke="#dde6f2" stroke-width="0.6"/><circle cx="180.6" cy="5" r="3.4" fill="url(#sph)"/><circle cx="192.8" cy="5" r="3.4" fill="url(#sph)"/><circle cx="205.1" cy="5" r="3.4" fill="url(#sph)"/><path d="M203.1 7L207.1 3" stroke="#2b579a" stroke-width="0.9"/></svg>
<div class="b" style="left:65.1px;top:72px;width:222.9px;height:155.7px;box-shadow:1px 3px 8px rgba(0,0,0,0.4)"></div>
<div class="b" style="left:65.1px;top:72px;width:222.9px;height:155.7px;background:#f0f0f0;border:1px solid #5b8fc7"></div>
<div class="b" style="left:66.1px;top:73px;width:220.9px;height:12.6px;background:#fff"></div>
<svg class="b" style="left:68px;top:75px" width="9" height="9"><circle cx="4.4" cy="4" r="3.1" fill="#123a5e"/><path d="M3 5.5Q3.5 3.2 5.6 2.8L5.2 2.2L6.6 3L5.5 4L5.6 3.5Q4.2 3.8 3 5.5Z" fill="#fff"/></svg>
<div class="a" id="t53" style="left:78.00px;top:77.40px;font-size:6px;line-height:6px;color:#1a1a1a;transform:scaleX(0.8850);transform-origin:0 0;">Robot Machining Setup</div>
<div class="b" style="left:235.3px;top:78.6px;width:4.4px;height:0.6px;background:#666"></div>
<svg class="b" style="left:253px;top:75px" width="9" height="8"><rect x="2.2" y="1.3" width="4.6" height="4.6" fill="none" stroke="#555" stroke-width="0.5"/></svg>
<svg class="b" style="left:273px;top:74.5px" width="9" height="9"><path d="M2 2L6.6 6.6M6.6 2L2 6.6" stroke="#555" stroke-width="0.5"/></svg>
<div class="b" style="left:71.3px;top:91.3px;width:32.1px;height:17.1px;background:#e1e1e1;border:0.6px solid #c4c4c4"></div>
<div class="a" id="t54" style="left:82.15px;top:95.00px;font-size:5.6px;line-height:5.6px;color:#161616;transform:scaleX(0.8351);transform-origin:0 0;">Load</div>
<div class="a" id="t55" style="left:78.25px;top:100.50px;font-size:5.6px;line-height:5.6px;color:#161616;transform:scaleX(0.8356);transform-origin:0 0;">Selected</div>
<div class="b" style="left:107.2px;top:91.3px;width:31.7px;height:17.1px;background:#e1e1e1;border:1.2px solid #2a85dc"></div>
<div class="a" id="t56" style="left:111.55px;top:97.80px;font-size:5.6px;line-height:5.6px;color:#161616;transform:scaleX(0.8307);transform-origin:0 0;">Load File...</div>
<div class="b" style="left:142.4px;top:91.3px;width:28.9px;height:17.1px;background:#e1e1e1;border:0.6px solid #c4c4c4"></div>
<div class="a" id="t57" style="left:150.25px;top:95.00px;font-size:5.6px;line-height:5.6px;color:#161616;transform:scaleX(0.8323);transform-origin:0 0;">Empty</div>
<div class="a" id="t58" style="left:149.85px;top:100.50px;font-size:5.6px;line-height:5.6px;color:#161616;transform:scaleX(0.8036);transform-origin:0 0;">Project</div>
<div class="b" style="left:178px;top:91.3px;width:32.6px;height:17.1px;background:#e1e1e1;border:0.6px solid #c4c4c4"></div>
<div class="a" id="t59" style="left:184.20px;top:97.80px;font-size:5.6px;line-height:5.6px;color:#161616;transform:scaleX(0.8325);transform-origin:0 0;">Load Part</div>
<div class="b" style="left:215.8px;top:91.3px;width:30.2px;height:17.1px;background:#e1e1e1;border:0.6px solid #c4c4c4"></div>
<div class="a" id="t60" style="left:223.30px;top:95.00px;font-size:5.6px;line-height:5.6px;color:#161616;transform:scaleX(0.8571);transform-origin:0 0;">Default</div>
<div class="a" id="t61" style="left:224.70px;top:100.50px;font-size:5.6px;line-height:5.6px;color:#161616;transform:scaleX(0.8479);transform-origin:0 0;">Setup</div>
<div class="b" style="left:249.6px;top:91.3px;width:32.4px;height:17.1px;background:#e1e1e1;border:0.6px solid #c4c4c4"></div>
<div class="a" id="t62" style="left:259.60px;top:97.80px;font-size:5.6px;line-height:5.6px;color:#161616;transform:scaleX(0.8664);transform-origin:0 0;">Close</div>
<div class="a" id="t63" style="left:72.40px;top:110.80px;font-size:5.6px;line-height:5.6px;color:#161616;transform:scaleX(0.8015);transform-origin:0 0;">Recent projects:</div>
<div class="b" style="left:66px;top:120.4px;width:221.2px;height:99.5px;background:#fff;border-top:0.6px solid #c8c8c8"></div>
<div class="b" style="left:155.2px;top:121.5px;width:0.6px;height:8px;background:#e6e6e6"></div>
<div class="b" style="left:212.4px;top:121.5px;width:0.6px;height:8px;background:#e6e6e6"></div>
<div class="b" style="left:239.5px;top:121.5px;width:0.6px;height:8px;background:#e6e6e6"></div>
<div class="a" id="t64" style="left:69.00px;top:124.10px;font-size:5.6px;line-height:5.6px;color:#161616;transform:scaleX(0.7099);transform-origin:0 0;">File</div>
<div class="a" id="t65" style="left:157.90px;top:124.10px;font-size:5.6px;line-height:5.6px;color:#161616;transform:scaleX(0.8473);transform-origin:0 0;">Last Modified</div>
<div class="a" id="t66" style="left:215.40px;top:124.10px;font-size:5.6px;line-height:5.6px;color:#161616;transform:scaleX(0.8264);transform-origin:0 0;">Size</div>
<div class="a" id="t67" style="left:242.30px;top:124.10px;font-size:5.6px;line-height:5.6px;color:#161616;transform:scaleX(0.8684);transform-origin:0 0;">Path</div>
<div class="a" id="t68" style="left:69.00px;top:132.70px;font-size:5.6px;line-height:5.6px;color:#161616;transform:scaleX(0.8177);transform-origin:0 0;">Mastercam Plugin - Car hood - Empty.rdk</div>
<div class="a" id="t69" style="left:157.90px;top:132.70px;font-size:5.6px;line-height:5.6px;color:#161616;transform:scaleX(0.8302);transform-origin:0 0;">2018-12-21 9:04:01 PM</div>
<div class="a" id="t70" style="left:215.40px;top:132.70px;font-size:5.6px;line-height:5.6px;color:#161616;transform:scaleX(0.8301);transform-origin:0 0;">360.85 KB</div>
<div class="b" style="left:242.30px;top:130.80px;width:44.9px;height:9.4px;overflow:hidden"><div class="a" id="t71" style="left:0;top:2px;font-size:5.4px;line-height:5.4px;color:#1a1a1a;">D:/RoboDK_D/Video</div></div>
<div class="a" id="t72" style="left:69.00px;top:140.18px;font-size:5.6px;line-height:5.6px;color:#161616;transform:scaleX(0.7937);transform-origin:0 0;">Mastercam - 3-axis mold - Empty.rdk</div>
<div class="a" id="t73" style="left:157.90px;top:140.18px;font-size:5.6px;line-height:5.6px;color:#161616;transform:scaleX(0.8268);transform-origin:0 0;">2019-01-07 3:28:34 PM</div>
<div class="a" id="t74" style="left:215.40px;top:140.18px;font-size:5.6px;line-height:5.6px;color:#161616;transform:scaleX(0.7484);transform-origin:0 0;">2.66 MB</div>
<div class="b" style="left:242.30px;top:138.28px;width:44.9px;height:9.4px;overflow:hidden"><div class="a" id="t75" style="left:0;top:2px;font-size:5.4px;line-height:5.4px;color:#1a1a1a;">D:/RoboDK_D/Video</div></div>
<div class="a" id="t76" style="left:69.00px;top:147.66px;font-size:5.6px;line-height:5.6px;color:#161616;transform:scaleX(0.8556);transform-origin:0 0;">Tutorial Station.rdk</div>
<div class="a" id="t77" style="left:157.90px;top:147.66px;font-size:5.6px;line-height:5.6px;color:#161616;transform:scaleX(0.8268);transform-origin:0 0;">2019-01-16 4:24:24 PM</div>
<div class="a" id="t78" style="left:215.40px;top:147.66px;font-size:5.6px;line-height:5.6px;color:#161616;transform:scaleX(0.7484);transform-origin:0 0;">3.24 MB</div>
<div class="b" style="left:242.30px;top:145.76px;width:44.9px;height:9.4px;overflow:hidden"><div class="a" id="t79" style="left:0;top:2px;font-size:5.4px;line-height:5.4px;color:#1a1a1a;">D:/RoboDK_D/Video</div></div>
<div class="a" id="t80" style="left:69.00px;top:155.14px;font-size:5.6px;line-height:5.6px;color:#161616;transform:scaleX(0.8179);transform-origin:0 0;">Ex 01 - Angle Iron.rdk</div>
<div class="a" id="t81" style="left:157.90px;top:155.14px;font-size:5.6px;line-height:5.6px;color:#161616;transform:scaleX(0.8273);transform-origin:0 0;">2018-12-03 10:33:22 PM</div>
<div class="a" id="t82" style="left:215.40px;top:155.14px;font-size:5.6px;line-height:5.6px;color:#161616;transform:scaleX(0.6879);transform-origin:0 0;">2.1 MB</div>
<div class="b" style="left:242.30px;top:153.24px;width:44.9px;height:9.4px;overflow:hidden"><div class="a" id="t83" style="left:0;top:2px;font-size:5.4px;line-height:5.4px;color:#1a1a1a;">D:/RoboDK_D/Video</div></div>
<div class="a" id="t84" style="left:69.00px;top:162.62px;font-size:5.6px;line-height:5.6px;color:#161616;transform:scaleX(0.8257);transform-origin:0 0;">Ex 01 - Fanuc Welding Station.rdk</div>
<div class="a" id="t85" style="left:157.90px;top:162.62px;font-size:5.6px;line-height:5.6px;color:#161616;transform:scaleX(0.8403);transform-origin:0 0;">2018-11-01 10:46:50 AM</div>
<div class="a" id="t86" style="left:215.40px;top:162.62px;font-size:5.6px;line-height:5.6px;color:#161616;transform:scaleX(0.8301);transform-origin:0 0;">552.59 KB</div>
<div class="b" style="left:242.30px;top:160.72px;width:44.9px;height:9.4px;overflow:hidden"><div class="a" id="t87" style="left:0;top:2px;font-size:5.4px;line-height:5.4px;color:#1a1a1a;">D:/RoboDK_D/Video</div></div>
<div class="a" id="t88" style="left:69.00px;top:170.10px;font-size:5.6px;line-height:5.6px;color:#161616;transform:scaleX(0.8437);transform-origin:0 0;">62939.rdk</div>
<div class="a" id="t89" style="left:157.90px;top:170.10px;font-size:5.6px;line-height:5.6px;color:#161616;transform:scaleX(0.8268);transform-origin:0 0;">2019-01-24 2:53:26 PM</div>
<div class="a" id="t90" style="left:215.40px;top:170.10px;font-size:5.6px;line-height:5.6px;color:#161616;transform:scaleX(0.6879);transform-origin:0 0;">7.6 MB</div>
<div class="b" style="left:242.30px;top:168.20px;width:44.9px;height:9.4px;overflow:hidden"><div class="a" id="t91" style="left:0;top:2px;font-size:5.4px;line-height:5.4px;color:#1a1a1a;">C:/Users/Jeremy Rob</div></div>
<div class="a" id="t92" style="left:69.00px;top:177.58px;font-size:5.6px;line-height:5.6px;color:#161616;transform:scaleX(0.7968);transform-origin:0 0;">Auto - 20190123.rdk</div>
<div class="a" id="t93" style="left:157.90px;top:177.58px;font-size:5.6px;line-height:5.6px;color:#161616;transform:scaleX(0.8211);transform-origin:0 0;">Moved or deleted</div>
<div class="a" id="t94" style="left:215.40px;top:177.58px;font-size:5.6px;line-height:5.6px;color:#161616;transform:scaleX(0.7613);transform-origin:0 0;">0 B</div>
<div class="b" style="left:242.30px;top:175.68px;width:44.9px;height:9.4px;overflow:hidden"><div class="a" id="t95" style="left:0;top:2px;font-size:5.4px;line-height:5.4px;color:#1a1a1a;">D:/RoboDK_D/Client</div></div>
<div class="b" style="left:287.2px;top:120px;width:1px;height:107px;background:#5b8fc7"></div>
<div class="b" style="left:288.2px;top:120px;width:10px;height:0px"></div>
<div class="b" style="left:66px;top:219.9px;width:221.2px;height:6.6px;background:#f0f0f0"></div>
<div class="b" style="left:74px;top:220.4px;width:87.3px;height:5.6px;background:#cdcdcd"></div>
<svg class="b" style="left:66px;top:219.9px" width="222" height="7"><path d="M5 1.8L3.2 3.3L5 4.8" fill="none" stroke="#555" stroke-width="0.7"/><path d="M216.4 1.8L218.2 3.3L216.4 4.8" fill="none" stroke="#555" stroke-width="0.7"/></svg>
<div class="b" style="left:172.5px;top:84px;width:43.7px;height:35.2px;border-radius:8px;box-shadow:1.5px 2.5px 5px rgba(0,0,0,0.5)"></div>
<div class="b" style="left:177px;top:89px;width:33.8px;height:24.6px;box-shadow:inset 2px 2px 4px rgba(0,0,0,0.18)"></div>
<div class="b" style="left:172.5px;top:84px;width:43.7px;height:35.2px;border:4.6px solid #ef7d2d;border-radius:8px"></div>
</body></html>
